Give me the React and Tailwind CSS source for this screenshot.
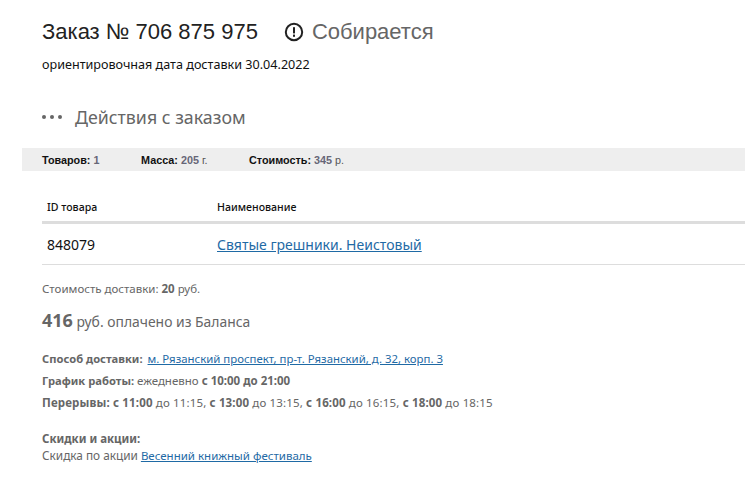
import React from 'react';

const sans = "font-['Noto_Sans',sans-serif]";

const Stat = ({ label, value, unit, className }) => (
  <span className={className}>
    <b className="text-[#111]">{label}:</b> <b className="text-[#666677]">{value}</b> <span className="font-normal text-[#555]">{unit}</span>
  </span>
);

const App = () => {
  return (
    <div className={`w-[745px] h-[490px] overflow-hidden bg-white ${sans}`}>
      {/* Header */}
      <div className="pl-[42px] pt-[18px]">
        <div className="flex items-center h-[27px] font-['Liberation_Sans',sans-serif] text-[22px] leading-[27px]">
          <span className="text-[#222]">Заказ № 706 875 975</span>
          <svg className="ml-[26px]" width="20" height="20" viewBox="0 0 20 20" fill="none">
            <circle cx="10" cy="10" r="8.2" stroke="#222" strokeWidth="2" />
            <rect x="9" y="5.2" width="2" height="6.2" fill="#222" />
            <rect x="9" y="12.6" width="2" height="2.2" fill="#222" />
          </svg>
          <span className="ml-[8px] text-[#666]">Собирается</span>
        </div>
        <div className="mt-[11px] text-[12.6px] leading-[18px] text-[#111]">ориентировочная дата доставки 30.04.2022</div>
        <div className="mt-[29px] flex items-center h-[28px]">
          <div className="flex gap-[4px]">
            <i className="block w-[4px] h-[4px] rounded-full bg-[#666]" />
            <i className="block w-[4px] h-[4px] rounded-full bg-[#666]" />
            <i className="block w-[4px] h-[4px] rounded-full bg-[#666]" />
          </div>
          <span className="ml-[13px] text-[17.8px] text-[#666]">Действия с заказом</span>
        </div>
      </div>

      {/* Totals */}
      <div className="mt-[17px] ml-[22px] h-[23px] bg-[#eeeeee] pl-[20px] pt-[1px] flex items-center font-['Liberation_Sans',sans-serif] text-[10.8px]">
        <Stat className="w-[99px]" label="Товаров" value="1" />
        <Stat className="w-[108px]" label="Масса" value="205" unit="г." />
        <Stat label="Стоимость" value="345" unit="р." />
      </div>

      {/* Table */}
      <div className="ml-[42px] mt-[24px]">
        <div className="flex h-[29px] items-center border-b-[3px] border-[#dddddd] text-[10.6px] font-medium text-[#111]">
          <span className="w-[175px] pl-[5px]">ID товара</span>
          <span>Наименование</span>
        </div>
        <div className="flex h-[41px] items-center border-b border-[#dddddd] text-[14px]">
          <span className="w-[175px] pl-[5px] text-[#111]">848079</span>
          <a className="text-[#1f6aa5] underline">Святые грешники. Неистовый</a>
        </div>
      </div>

      {/* Delivery */}
      <div className="ml-[42px] text-[#666]">
        <div className="mt-[15px] text-[11.5px] leading-[18px]">Стоимость доставки: <b>20</b> руб.</div>
        <div className="mt-[10px] text-[13.9px] leading-[24px]"><b className="text-[18px]">416</b> руб. оплачено из Баланса</div>
        <div className="mt-[14px] text-[11.5px] leading-[22px]">
          <div><b className="text-[11.2px]">Способ доставки:</b><a className="ml-[5px] text-[11.4px] text-[#1f6aa5] underline">м. Рязанский проспект, пр-т. Рязанский, д. 32, корп. 3</a></div>
          <div><b className="text-[11.2px]">График работы:</b> ежедневно <b className="text-[11.5px]">с 10:00 до 21:00</b></div>
          <div className="tracking-[0.15px]"><b>Перерывы: с 11:00</b> до 11:15, <b>с 13:00</b> до 13:15, <b>с 16:00</b> до 16:15, <b>с 18:00</b> до 18:15</div>
        </div>
        <div className="mt-[17px] text-[11.5px] leading-[16px]">
          <div><b>Скидки и акции:</b></div>
          <div><span className="text-[11.8px]">Скидка по акции</span> <a className="text-[#1f6aa5] underline">Весенний книжный фестиваль</a></div>
        </div>
      </div>
    </div>
  );
};

export default App;
